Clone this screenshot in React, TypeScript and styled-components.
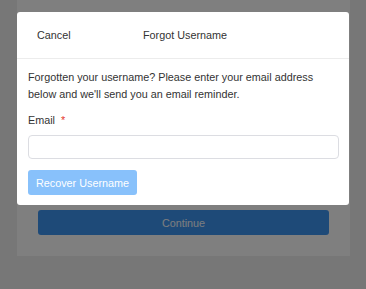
import React from "react";
import styled, { createGlobalStyle } from "styled-components";

const Global = createGlobalStyle`
  html, body { margin: 0; padding: 0; }
  body {
    width: 366px;
    height: 289px;
    background: #eeeeee;
    font-family: "Liberation Sans", Arial, Helvetica, sans-serif;
    overflow: hidden;
  }
`;

const Page = styled.div`
  position: relative;
  width: 366px;
  height: 289px;
  padding: 0 16px 0 17px;
  box-sizing: border-box;
`;

const Card = styled.div`
  height: 256px;
  background: #ffffff;
  display: flex;
  flex-direction: column;
  justify-content: flex-end;
  padding: 0 21px 21px 21px;
  box-sizing: border-box;
`;

const PrimaryButton = styled.button`
  height: 25px;
  border: none;
  border-radius: 3px;
  background: #3d95f1;
  color: #f8fbff;
  font-family: inherit;
  font-size: 10.8px;
  padding: 0;
`;

const Overlay = styled.div`
  position: absolute;
  inset: 0;
  background: rgba(0, 0, 0, 0.5);
  padding: 12px 17px 0 17px;
  box-sizing: border-box;
`;

const Modal = styled.div`
  background: #ffffff;
  border-radius: 3px;
  height: 193px;
  display: flex;
  flex-direction: column;
  color: #333333;
  font-size: 10.8px;
`;

const Header = styled.div`
  height: 46px;
  border-bottom: 1px solid #ececec;
  display: flex;
  align-items: center;
  padding-left: 20px;
`;

const HeaderAction = styled.span`
  width: 106px;
  color: #333;
`;

const Title = styled.span`
  color: #333;
`;

const Body = styled.div`
  padding: 10px 10px 0 11px;
  display: flex;
  flex-direction: column;
`;

const Intro = styled.p`
  margin: 0;
  line-height: 17px;
`;

const Label = styled.div`
  margin-top: 9px;
  line-height: 17px;
`;

const Required = styled.span`
  color: #e4342a;
  margin-left: 6px;
`;

const Input = styled.input`
  margin-top: 6px;
  height: 24px;
  width: 311px;
  box-sizing: border-box;
  border: 1px solid #dcdde2;
  border-radius: 4px;
  outline: none;
`;

const RecoverButton = styled.button`
  margin-top: 11px;
  align-self: flex-start;
  height: 25px;
  width: 109px;
  border: none;
  border-radius: 3px;
  background: #88c1fb;
  color: #ffffff;
  font-family: inherit;
  font-size: 10.8px;
  padding: 0;
  white-space: nowrap;
`;

export default function App() {
  return (
    <>
      <Global />
      <Page>
        <Card>
          <PrimaryButton>Continue</PrimaryButton>
        </Card>
        <Overlay>
          <Modal>
            <Header>
              <HeaderAction>Cancel</HeaderAction>
              <Title>Forgot Username</Title>
            </Header>
            <Body>
              <Intro>
                Forgotten your username? Please enter your email address
                <br />
                below and we'll send you an email reminder.
              </Intro>
              <Label>
                Email<Required>*</Required>
              </Label>
              <Input type="email" />
              <RecoverButton>Recover Username</RecoverButton>
            </Body>
          </Modal>
        </Overlay>
      </Page>
    </>
  );
}
